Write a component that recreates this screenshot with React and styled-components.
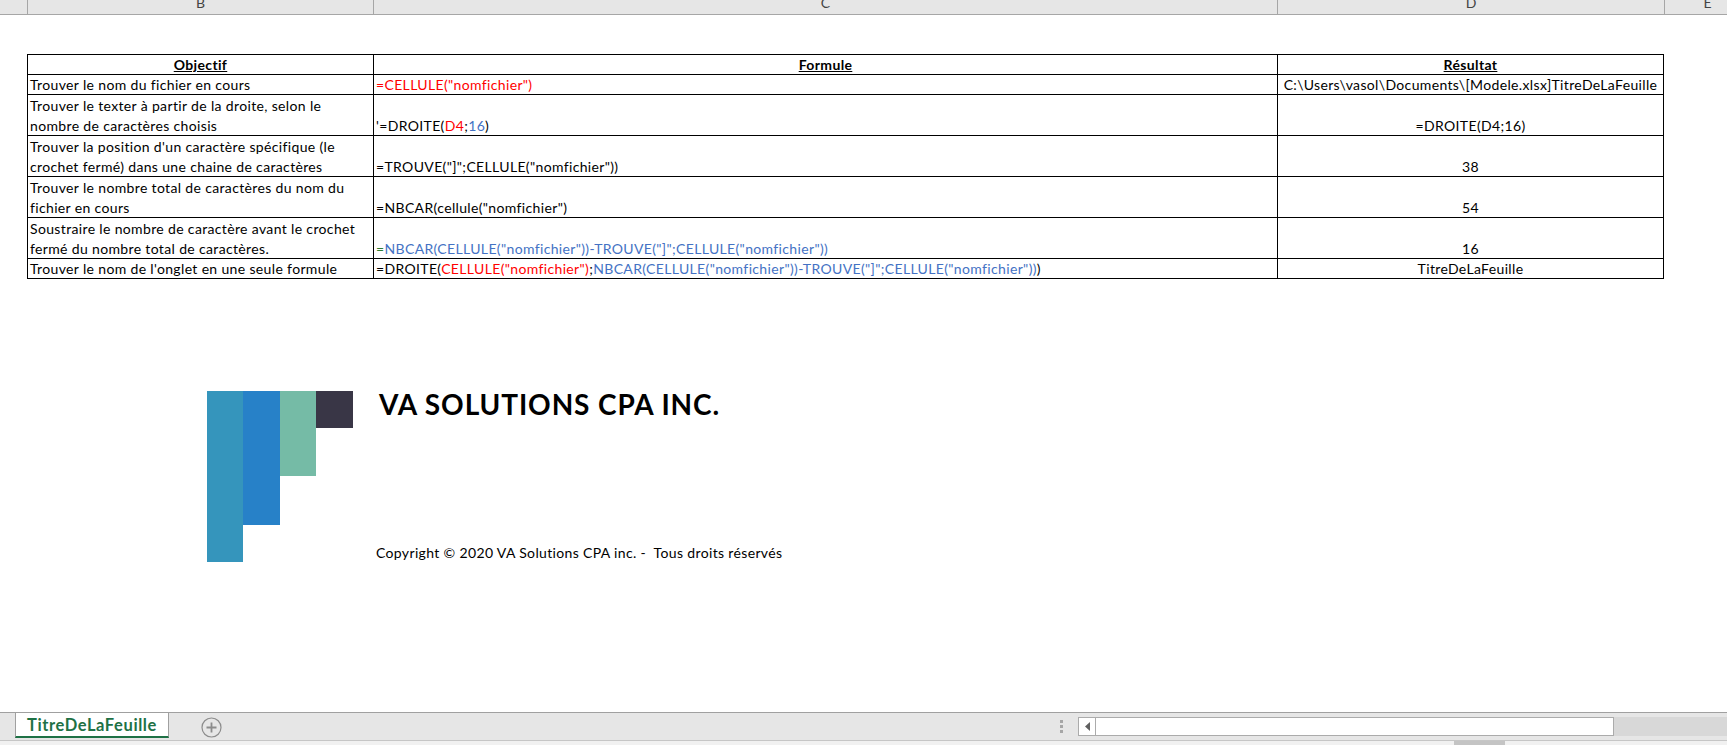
import React from 'react';
import styled, { createGlobalStyle } from 'styled-components';

const GlobalStyle = createGlobalStyle`
  html, body {
    margin: 0;
    padding: 0;
    background: #fff;
    font-family: Lato, "Liberation Sans", sans-serif;
    color: #000;
  }
`;

const Page = styled.div`
  height: 100vh;
  display: flex;
  flex-direction: column;
  overflow: hidden;
`;

const ColumnHeaders = styled.div`
  height: 14px;
  flex: none;
  display: flex;
  background: #e6e6e6;
  border-bottom: 1px solid #a6a6a6;
  overflow: hidden;
`;

const ColumnHeader = styled.div`
  width: ${(p) => p.$w}px;
  flex: none;
  box-sizing: border-box;
  border-right: 1px solid #a6a6a6;
  display: flex;
  align-items: flex-end;
  justify-content: center;
  padding-bottom: 4px;
  font-size: 14px;
  line-height: 14px;
  color: #444;
`;

const Sheet = styled.div`
  flex: 1;
  min-height: 0;
  padding: 39px 0 0 27px;
`;

const Table = styled.table`
  border-collapse: collapse;
  table-layout: fixed;
  width: 1636px;
`;

const Col = styled.col`
  width: ${(p) => p.$w}px;
`;

const HeadCell = styled.th`
  border: 1px solid #000;
  height: 19px;
  padding: 0 2px;
  font-size: 14px;
  letter-spacing: 0.35px;
  line-height: 19px;
  font-weight: 700;
  text-decoration: underline;
  text-align: center;
`;

const Cell = styled.td`
  border: 1px solid #000;
  height: ${(p) => (p.$tall ? 39 : 19)}px;
  padding: ${(p) => (p.$tall ? '1px 2px 0' : '0 2px')};
  font-size: 14px;
  letter-spacing: 0.35px;
  line-height: ${(p) => (p.$tall ? 19.5 : 19)}px;
  vertical-align: bottom;
  text-align: ${(p) => (p.$center ? 'center' : 'left')};
  white-space: nowrap;
`;

const Red = styled.span`
  color: #ff0000;
`;

const Blue = styled.span`
  color: #4472c4;
`;

const Green = styled.span`
  color: #2e7d32;
`;

const Brand = styled.div`
  display: flex;
  margin: 112px 0 0 180px;
  height: 171px;
`;

const Logo = styled.svg`
  width: 146px;
  height: 171px;
  flex: none;
`;

const BrandText = styled.div`
  display: flex;
  flex-direction: column;
  justify-content: space-between;
  margin-left: 23px;
`;

const BrandName = styled.div`
  font-size: 28px;
  letter-spacing: 0.9px;
  line-height: 26px;
  font-weight: 700;
  margin-left: 3px;
`;

const Copyright = styled.div`
  font-size: 14px;
  letter-spacing: 0.35px;
  line-height: 18px;
`;

const TabBar = styled.div`
  height: 29px;
  flex: none;
  display: flex;
  box-sizing: border-box;
  background: #e6e6e6;
  border-top: 1px solid #a0a0a0;
  border-bottom: 1px solid #c6c6c6;
`;

const Tab = styled.div`
  margin: -1px 0 0 15px;
  width: 154px;
  height: 26px;
  box-sizing: border-box;
  background: #fff;
  border: 1px solid #a0a0a0;
  border-bottom: 2px solid #1e7145;
  display: flex;
  align-items: center;
  justify-content: center;
  font-size: 16.5px;
  letter-spacing: 0.6px;
  font-weight: 700;
  color: #1e7145;
`;

const AddSheet = styled.svg`
  width: 21px;
  height: 21px;
  margin: 4px 0 0 32px;
  flex: none;
`;

const Splitter = styled.div`
  margin: 7px 15px 0 auto;
  display: flex;
  flex-direction: column;
  gap: 2px;
`;

const SplitterDot = styled.span`
  width: 3px;
  height: 3px;
  background: #a6a6a6;
`;

const ScrollTrack = styled.div`
  width: 649px;
  height: 19px;
  margin-top: 4px;
  flex: none;
  display: flex;
  background: #d8d8d8;
`;

const ScrollArrow = styled.div`
  width: 18px;
  flex: none;
  box-sizing: border-box;
  background: #fff;
  border: 1px solid #ababab;
  display: flex;
  align-items: center;
  justify-content: center;
`;

const ScrollThumb = styled.div`
  width: 518px;
  flex: none;
  box-sizing: border-box;
  background: #fff;
  border: 1px solid #ababab;
  border-left: none;
`;

const StatusStrip = styled.div`
  height: 4px;
  flex: none;
  background: #f1f1f1;
  display: flex;
  padding-left: 1454px;
`;

const StatusGrip = styled.div`
  width: 51px;
  background: #c4c4c4;
`;

const rows = [
  {
    goal: 'Trouver le nom du fichier en cours',
    formula: <Red>=CELLULE("nomfichier")</Red>,
    result: 'C:\\Users\\vasol\\Documents\\[Modele.xlsx]TitreDeLaFeuille',
  },
  {
    tall: true,
    goal: ['Trouver le texter à partir de la droite, selon le', 'nombre de caractères choisis'],
    formula: (
      <>
        '=DROITE(<Red>D4</Red>;<Blue>16</Blue>)
      </>
    ),
    result: '=DROITE(D4;16)',
  },
  {
    tall: true,
    goal: ["Trouver la position d'un caractère spécifique (le", 'crochet fermé) dans une chaine de caractères'],
    formula: '=TROUVE("]";CELLULE("nomfichier"))',
    result: '38',
  },
  {
    tall: true,
    goal: ['Trouver le nombre total de caractères du nom du', 'fichier en cours'],
    formula: '=NBCAR(cellule("nomfichier")',
    result: '54',
  },
  {
    tall: true,
    goal: ['Soustraire le nombre de caractère avant le crochet', 'fermé du nombre total de caractères.'],
    formula: (
      <>
        <Green>=</Green>
        <Blue>NBCAR(CELLULE("nomfichier"))-TROUVE("]";CELLULE("nomfichier"))</Blue>
      </>
    ),
    result: '16',
  },
  {
    goal: "Trouver le nom de l'onglet en une seule formule",
    formula: (
      <>
        =DROITE(<Red>CELLULE("nomfichier")</Red>;
        <Blue>NBCAR(CELLULE("nomfichier"))-TROUVE("]";CELLULE("nomfichier"))</Blue>)
      </>
    ),
    result: 'TitreDeLaFeuille',
  },
];

const App = () => (
  <Page>
    <GlobalStyle />
    <ColumnHeaders>
      <ColumnHeader $w={28} />
      <ColumnHeader $w={346}>B</ColumnHeader>
      <ColumnHeader $w={904}>C</ColumnHeader>
      <ColumnHeader $w={387}>D</ColumnHeader>
      <ColumnHeader $w={86}>E</ColumnHeader>
    </ColumnHeaders>

    <Sheet>
      <Table>
        <colgroup>
          <Col $w={346} />
          <Col $w={904} />
          <Col $w={386} />
        </colgroup>
        <thead>
          <tr>
            <HeadCell>Objectif</HeadCell>
            <HeadCell>Formule</HeadCell>
            <HeadCell>Résultat</HeadCell>
          </tr>
        </thead>
        <tbody>
          {rows.map((row, i) => (
            <tr key={i}>
              <Cell $tall={row.tall}>
                {Array.isArray(row.goal) ? (
                  <>
                    {row.goal[0]}
                    <br />
                    {row.goal[1]}
                  </>
                ) : (
                  row.goal
                )}
              </Cell>
              <Cell $tall={row.tall}>{row.formula}</Cell>
              <Cell $tall={row.tall} $center>
                {row.result}
              </Cell>
            </tr>
          ))}
        </tbody>
      </Table>

      <Brand>
        <Logo viewBox="0 0 146 171">
          <rect x="0" y="0" width="36" height="171" fill="#3595bc" />
          <rect x="36" y="0" width="37" height="134" fill="#2781c8" />
          <rect x="73" y="0" width="36" height="85" fill="#75bba6" />
          <rect x="109" y="0" width="37" height="37" fill="#393646" />
        </Logo>
        <BrandText>
          <BrandName>VA SOLUTIONS CPA INC.</BrandName>
          <Copyright>Copyright © 2020 VA Solutions CPA inc. -&nbsp; Tous droits réservés</Copyright>
        </BrandText>
      </Brand>
    </Sheet>

    <TabBar>
      <Tab>TitreDeLaFeuille</Tab>
      <AddSheet viewBox="0 0 21 21">
        <circle cx="10.5" cy="10.5" r="9.5" fill="none" stroke="#8c8c8c" strokeWidth="1.2" />
        <path d="M10.5 5.5v10M5.5 10.5h10" stroke="#8c8c8c" strokeWidth="1.8" />
      </AddSheet>
      <Splitter>
        <SplitterDot />
        <SplitterDot />
        <SplitterDot />
      </Splitter>
      <ScrollTrack>
        <ScrollArrow>
          <svg width="5" height="9" viewBox="0 0 5 9">
            <path d="M5 0v9L0 4.5z" fill="#606060" />
          </svg>
        </ScrollArrow>
        <ScrollThumb />
      </ScrollTrack>
    </TabBar>
    <StatusStrip>
      <StatusGrip />
    </StatusStrip>
  </Page>
);

export default App;
